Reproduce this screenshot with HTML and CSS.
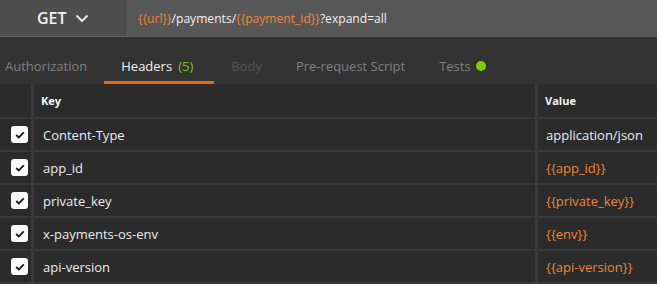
FILE: index.html
```html
<!DOCTYPE html>
<html>
<head>
<meta charset="utf-8">
<link rel="stylesheet" href="styles.css">
</head>
<body>
<div class="top">
  <div class="method">
    <span class="method-name">GET</span>
    <svg class="chev" width="14" height="9" viewBox="0 0 14 9"><path d="M1.5 1.5 L7 7 L12.5 1.5" fill="none" stroke="#f2f2f2" stroke-width="1.8"/></svg>
  </div>
  <div class="url"><span class="var">{{url}}</span>/payments/<span class="var">{{payment_id}}</span>?expand=all</div>
</div>
<div class="tabs">
  <div class="tab dim">Authorization</div>
  <div class="tab active">Headers<span class="count">(5)</span></div>
  <div class="tab disabled">Body</div>
  <div class="tab dim">Pre-request Script</div>
  <div class="tab dim">Tests <span class="dot"></span></div>
</div>
<div class="table">
  <div class="cell"></div><div class="cell head">Key</div><div class="cell head">Value</div>

  <div class="cell chk"><span class="box"><svg width="10" height="8" viewBox="0 0 10 8"><path d="M1.2 4 L3.8 6.4 L8.8 1.4" fill="none" stroke="#1a1a1a" stroke-width="1.8"/></svg></span></div>
  <div class="cell key">Content-Type</div><div class="cell val">application/json</div>

  <div class="cell chk"><span class="box"><svg width="10" height="8" viewBox="0 0 10 8"><path d="M1.2 4 L3.8 6.4 L8.8 1.4" fill="none" stroke="#1a1a1a" stroke-width="1.8"/></svg></span></div>
  <div class="cell key">app_id</div><div class="cell val var">{{app_id}}</div>

  <div class="cell chk"><span class="box"><svg width="10" height="8" viewBox="0 0 10 8"><path d="M1.2 4 L3.8 6.4 L8.8 1.4" fill="none" stroke="#1a1a1a" stroke-width="1.8"/></svg></span></div>
  <div class="cell key">private_key</div><div class="cell val var">{{private_key}}</div>

  <div class="cell chk"><span class="box"><svg width="10" height="8" viewBox="0 0 10 8"><path d="M1.2 4 L3.8 6.4 L8.8 1.4" fill="none" stroke="#1a1a1a" stroke-width="1.8"/></svg></span></div>
  <div class="cell key">x-payments-os-env</div><div class="cell val var">{{env}}</div>

  <div class="cell chk"><span class="box"><svg width="10" height="8" viewBox="0 0 10 8"><path d="M1.2 4 L3.8 6.4 L8.8 1.4" fill="none" stroke="#1a1a1a" stroke-width="1.8"/></svg></span></div>
  <div class="cell key">api-version</div><div class="cell val var">{{api-version}}</div>
</div>
</body>
</html>
```
FILE: styles.css
```css
html, body {
  margin: 0;
  padding: 0;
  background: #2b2b2b;
  font-family: "Open Sans", "DejaVu Sans", sans-serif;
  overflow: hidden;
}
.top {
  display: flex;
  height: 36px;
  border-bottom: 1px solid #5d5d5d;
}
.method {
  width: 126px;
  background: #4e4e4e;
  border-right: 1px solid #474747;
  display: flex;
  align-items: center;
  padding-left: 37px;
  box-sizing: border-box;
  gap: 8px;
}
.method-name {
  color: #f2f2f2;
  font-size: 16px;
  font-weight: 600;
}
.chev { margin-top: 1px; }
.url {
  flex: 1;
  background: #575757;
  color: #f0f0f0;
  font-size: 12.1px;
  display: flex;
  align-items: center;
  padding-left: 12px;
  white-space: pre;
}
.var { color: #f0843a; }
.tabs {
  height: 47px;
  background: #333333;
  display: flex;
  margin-left: -12px;
}
.tab {
  padding: 13px 17px 0;
  font-size: 13px;
  display: flex;
  align-items: center;
  white-space: pre;
  border-bottom: 3px solid transparent;
}
.tab.dim { color: #808080; }
.tab.disabled { color: #555555; }
.tab.active {
  color: #f2f2f2;
  border-bottom-color: #e8670f;
}
.count {
  color: #78c80e;
  padding: 0 4px 0 6px;
}
.dot {
  display: inline-block;
  width: 10px;
  height: 10px;
  border-radius: 50%;
  background: #7ad000;
  margin-left: 2px;
}
.table {
  display: grid;
  grid-template-columns: 31px 1fr 119px;
  grid-auto-rows: 31px;
  grid-template-rows: 33px;
  column-gap: 3px;
  row-gap: 2px;
  background: #393939;
  padding-bottom: 2px;
}
.cell {
  background: #2b2b2b;
  display: flex;
  align-items: center;
  font-size: 13px;
  color: #ececec;
  white-space: pre;
}
.head {
  font-size: 11px;
  font-weight: 700;
  color: #f5f5f5;
  padding-left: 7px;
}
.key { padding-left: 9px; }
.val { padding-left: 8px; }
.val.var { color: #f0843a; }
.chk { padding-left: 11px; }
.box {
  width: 17px;
  height: 17px;
  background: #fafafa;
  border-radius: 3px;
  display: flex;
  align-items: center;
  justify-content: center;
}
```
